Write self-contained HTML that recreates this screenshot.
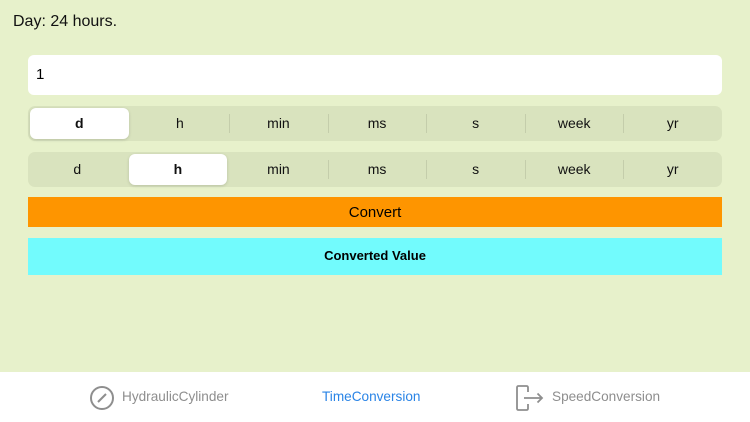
<!DOCTYPE html>
<html><head><style>
body{margin:0;width:750px;height:422px;background:#e7f1cb;font-family:"Liberation Sans",sans-serif;position:relative;overflow:hidden}
.t{position:absolute;left:13px;top:13px;font-size:16px;color:#111}
.in{position:absolute;left:28px;top:55px;width:694px;height:40px;background:#fff;border-radius:6px;box-sizing:border-box;padding-left:8px;line-height:40px;font-size:15px}
.seg{position:absolute;left:28px;width:694px;height:35px;background:#d9e3be;border-radius:7px;display:flex}
.seg div{flex:1;text-align:center;line-height:35px;font-size:14px;color:#111;position:relative}
.seg div+div:before{content:"";position:absolute;left:0;top:8px;height:19px;width:1px;background:#c4cdab}
.seg div.s{background:#fff;border-radius:6px;margin:2px;line-height:31px;font-weight:bold;box-shadow:0 1px 3px rgba(0,0,0,.15)}
.seg div.s:before,.seg div.s+div:before{display:none}
.cv{position:absolute;left:28px;top:197px;width:694px;height:30px;background:#fe9500;text-align:center;line-height:32px;font-size:15px}
.cy{position:absolute;left:28px;top:238px;width:694px;height:37px;background:#72fbfd;text-align:center;line-height:35px;font-size:13px;font-weight:bold}
.tab{position:absolute;left:0;top:372px;width:750px;height:50px;background:#fff;font-size:13.6px;color:#8e8e8e}
.tab span{position:absolute;top:17px}
</style></head><body>
<div class="t">Day: 24 hours.</div>
<div class="in">1</div>
<div class="seg" style="top:106px"><div class="s">d</div><div>h</div><div>min</div><div>ms</div><div>s</div><div>week</div><div>yr</div></div>
<div class="seg" style="top:152px"><div>d</div><div class="s">h</div><div>min</div><div>ms</div><div>s</div><div>week</div><div>yr</div></div>
<div class="cv">Convert</div>
<div class="cy">Converted Value</div>
<div class="tab">
<svg style="position:absolute;left:89px;top:13px" width="26" height="26"><circle cx="13" cy="13" r="11" fill="none" stroke="#8e8e8e" stroke-width="2"/><line x1="9" y1="17" x2="17" y2="9" stroke="#8e8e8e" stroke-width="2"/></svg>
<span style="left:122px">HydraulicCylinder</span>
<span style="left:322px;color:#2a84e6">TimeConversion</span>
<svg style="position:absolute;left:514px;top:12px" width="32" height="28"><path d="M14 8V3.5Q14 2 12.5 2H4.5Q3 2 3 3.5v21Q3 26 4.5 26h8q1.5 0 1.5-1.5V20" fill="none" stroke="#8e8e8e" stroke-width="1.8"/><path d="M10 14h18M23.5 9.5 28 14l-4.5 4.5" fill="none" stroke="#8e8e8e" stroke-width="1.8"/></svg>
<span style="left:552px">SpeedConversion</span>
</div>
</body></html>
